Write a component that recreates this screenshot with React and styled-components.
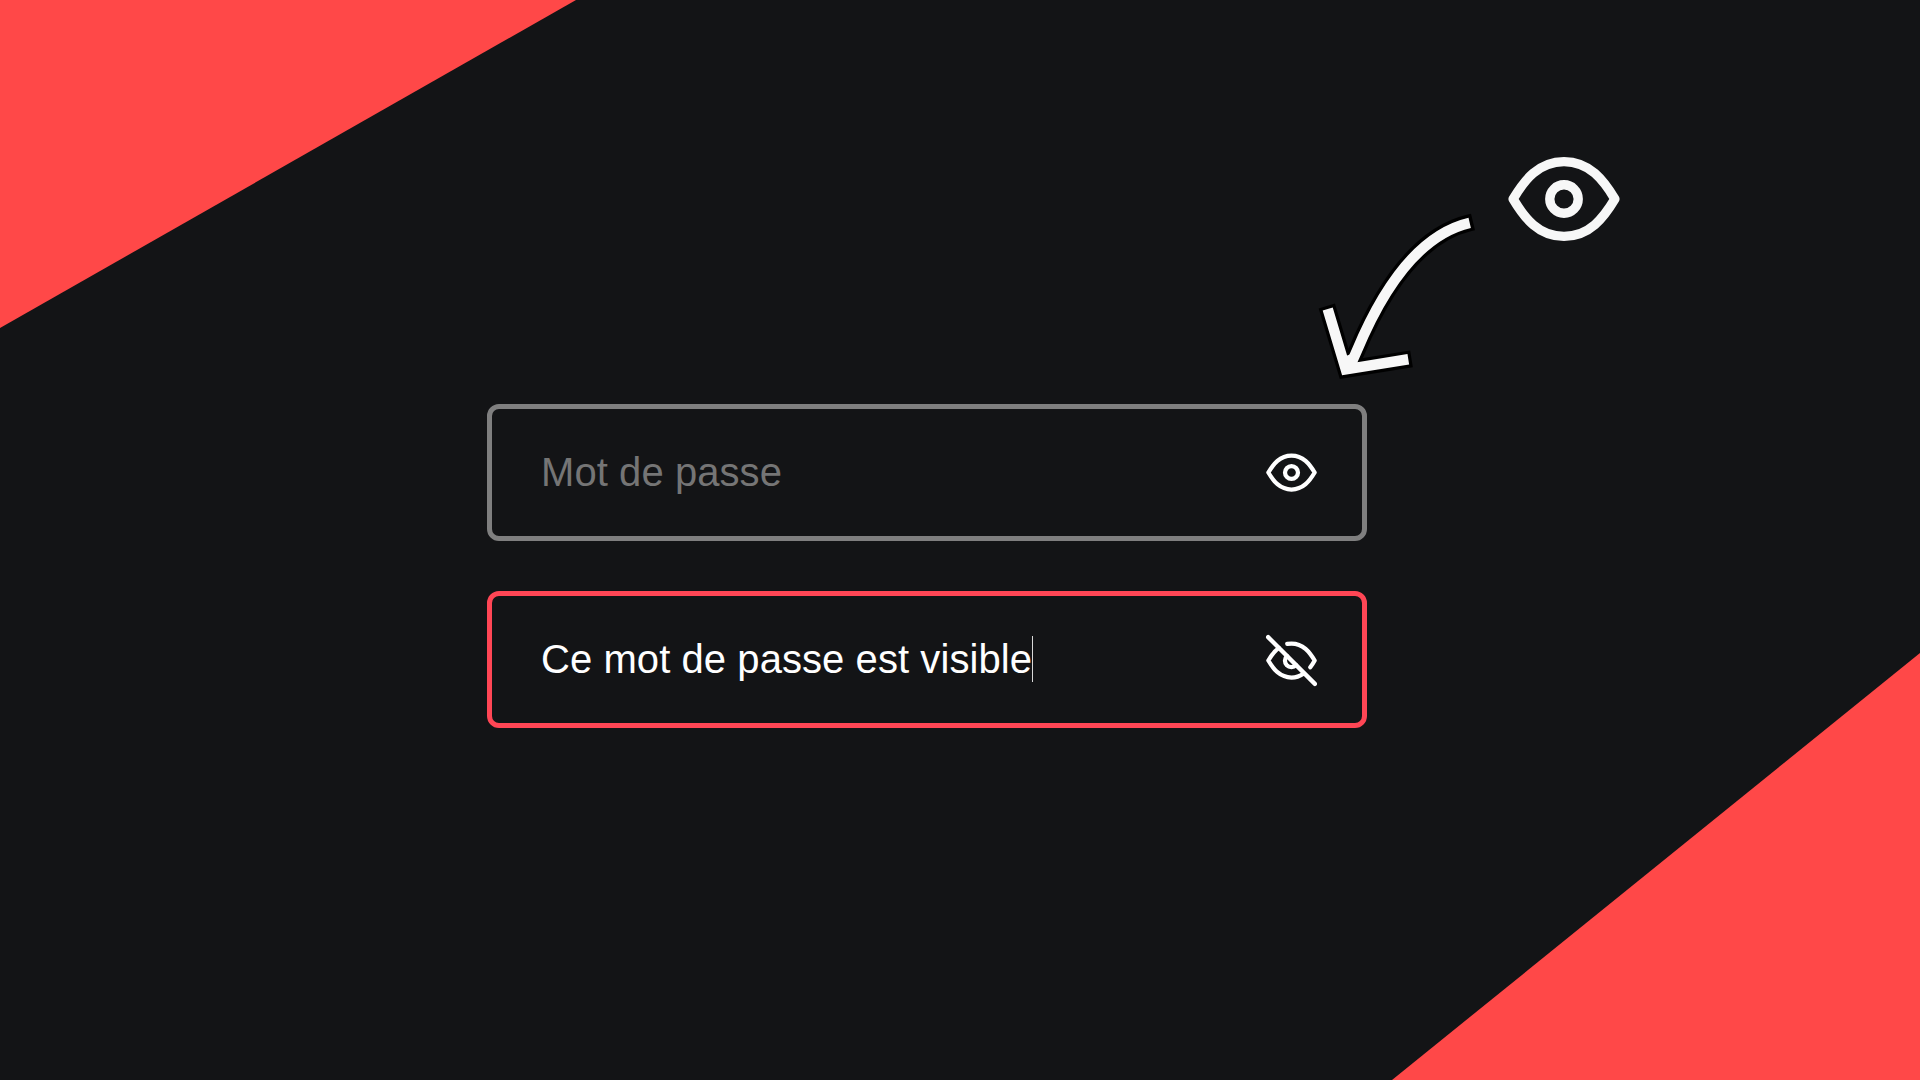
import React from "react";
import styled, { createGlobalStyle } from "styled-components";

const Global = createGlobalStyle`
  * { box-sizing: border-box; }
  body { margin: 0; background: #131416; overflow: hidden; }
`;

const Stage = styled.main`
  position: relative;
  width: 1920px;
  height: 1080px;
  padding: 404px 0 0 487px;
  overflow: hidden;
  background: #131416;
  font-family: Arial, "Liberation Sans", sans-serif;
`;

const Corner = styled.div`
  position: absolute;
  background: #ff4848;
`;

const TopCorner = styled(Corner)`
  top: 0;
  left: 0;
  width: 576px;
  height: 328px;
  clip-path: polygon(0 0, 100% 0, 0 100%);
`;

const BottomCorner = styled(Corner)`
  right: 0;
  bottom: 0;
  width: 528px;
  height: 427px;
  clip-path: polygon(100% 0, 100% 100%, 0 100%);
`;

const Form = styled.form`
  display: flex;
  flex-direction: column;
  gap: 50px;
  width: 880px;
`;

const Field = styled.label`
  display: flex;
  align-items: center;
  justify-content: space-between;
  height: 137px;
  padding: 0 45px 1px 49px;
  border: 5px solid ${(p) => (p.$active ? "#ff4655" : "#7f7f7f")};
  border-radius: 12px;
`;

const Value = styled.span`
  display: flex;
  align-items: center;
  color: ${(p) => (p.$placeholder ? "#757575" : "#ffffff")};
  font-size: 40px;
  line-height: 46px;
  letter-spacing: 0.07px;
  white-space: nowrap;
`;

const Caret = styled.i`
  width: 1px;
  height: 46px;
  background: #d8d8d8;
`;

const Icon = styled.svg`
  display: block;
  width: ${(p) => p.$size}px;
  height: ${(p) => p.$size}px;
  margin-top: ${(p) => p.$drop || 0}px;
  overflow: visible;
  fill: none;
  stroke: ${(p) => p.$color || "#ffffff"};
  stroke-width: 2;
  stroke-linecap: round;
  stroke-linejoin: round;
`;

const Callout = styled.div`
  position: absolute;
  left: 1508px;
  top: 143px;
`;

const Arrow = styled.svg`
  position: absolute;
  left: 1300px;
  top: 200px;
  width: 190px;
  height: 190px;
  fill: none;
`;

function Eye({ size, color }) {
  return (
    <Icon viewBox="0 0 24 24" $size={size} $color={color}>
      <path d="M1.100 12C3.500 8 6.500 4 12 4s8.500 4 10.900 8C20.500 16 17.500 20 12 20S3.500 16 1.100 12z" />
      <circle cx="12" cy="12" r="3.050" />
    </Icon>
  );
}

function EyeOff({ size }) {
  return (
    <Icon viewBox="0 0 24 24" $size={size} $drop={2}>
      <path d="M17.600 18.200C16 19.300 14.100 20 12 20 6.500 20 3.500 16 1.100 12 2.500 9.700 4 7.500 6.060 6.060M10 4.150C10.700 4.050 11.300 4 12 4c5.500 0 8.500 4 10.900 8-.6 1.100-1.300 2.200-2.060 3.190M14.120 14.120a3 3 0 1 1-4.240-4.240" />
      <line x1="1" y1="1" x2="23" y2="23" />
    </Icon>
  );
}

export default function App() {
  return (
    <>
      <Global />
      <Stage>
        <TopCorner />
        <BottomCorner />
        <Form>
          <Field>
            <Value $placeholder>Mot de passe</Value>
            <Eye size={51} />
          </Field>
          <Field $active>
            <Value>
              Ce mot de passe est visible
              <Caret />
            </Value>
            <EyeOff size={51} />
          </Field>
        </Form>
        <Callout>
          <Eye size={112} color="#f7f7f7" />
        </Callout>
        <Arrow viewBox="0 0 190 190">
          <path
            d="M173 22L169.700 22.800C126 33 88 76 56.500 151.500L51 164M26.800 106L45.800 169.400 111.500 158.800"
            stroke="#000"
            strokeWidth="17"
          />
          <path
            d="M169.700 22.800C126 33 88 76 56.500 151.500L51 164M27.700 109L45.800 169.400 108.300 159.300"
            stroke="#f7f7f7"
            strokeWidth="10.500"
          />
          <path d="M46 156L51 154 56 163 46 169Z" fill="#f7f7f7" />
        </Arrow>
      </Stage>
    </>
  );
}
